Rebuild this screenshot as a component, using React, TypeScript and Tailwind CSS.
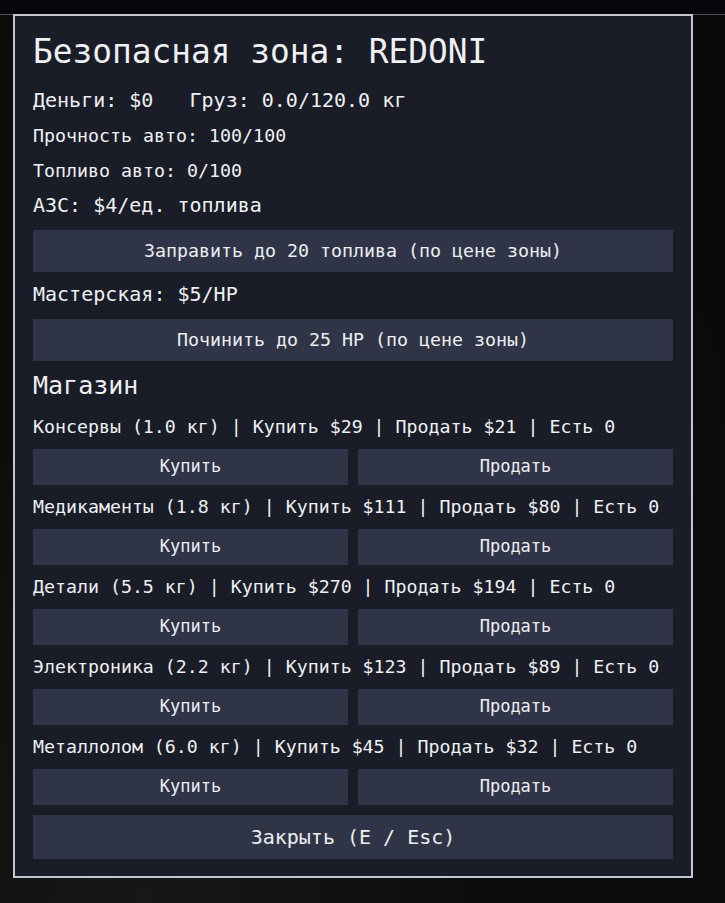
import React from 'react'

type Item = {
  name: string
  weight: string
  buy: number
  sell: number
  have: number
}

const items: Item[] = [
  { name: 'Консервы', weight: '1.0', buy: 29, sell: 21, have: 0 },
  { name: 'Медикаменты', weight: '1.8', buy: 111, sell: 80, have: 0 },
  { name: 'Детали', weight: '5.5', buy: 270, sell: 194, have: 0 },
  { name: 'Электроника', weight: '2.2', buy: 123, sell: 89, have: 0 },
  { name: 'Металлолом', weight: '6.0', buy: 45, sell: 32, have: 0 },
]

const mono = { fontFamily: '"DejaVu Sans Mono", "Liberation Mono", monospace' }

function Line({ children, small = false }: { children: React.ReactNode; small?: boolean }) {
  return (
    <div className={`h-[35px] leading-[35px] whitespace-pre ${small ? 'text-[18.3px]' : 'text-[20px]'}`}>
      {children}
    </div>
  )
}

function WideButton({ children, className = '' }: { children: React.ReactNode; className?: string }) {
  return (
    <button className={`w-full bg-[#2f3547] text-[#eceef2] flex items-center justify-center whitespace-pre ${className}`}>
      {children}
    </button>
  )
}

export default function App() {
  return (
    <div className="relative w-[725px] h-[903px] overflow-hidden bg-[#0a0a0a]" style={mono}>
      {/* top hud strip */}
      <div className="h-[15px] bg-[#05070c] border-b border-[#4a4f5a]" />

      {/* dim scene behind the dialog */}
      <div className="absolute left-0 right-0 top-[15px] bottom-0 bg-[radial-gradient(ellipse_at_20%_100%,#171717_0%,#0d0d0d_40%,#090909_100%)]" />

      {/* safe zone dialog */}
      <div className="absolute left-[13px] top-[14px] w-[680px] bg-[#1a1d27] border-2 border-[#c3c7cf] px-[18px] pt-[16px] pb-[17px] text-[#eef0f3]">
        <div className="h-[40px] leading-[40px] text-[32.8px] whitespace-pre">Безопасная зона: REDONI</div>

        <div className="mt-[11px]">
          <Line>Деньги: $0   Груз: 0.0/120.0 кг</Line>
          <Line small>Прочность авто: 100/100</Line>
          <Line small>Топливо авто: 0/100</Line>
          <Line>АЗС: $4/ед. топлива</Line>
        </div>

        <WideButton className="mt-[7px] h-[42px] text-[18.3px]">Заправить до 20 топлива (по цене зоны)</WideButton>

        <div className="mt-[5px]">
          <Line>Мастерская: $5/HP</Line>
        </div>

        <WideButton className="mt-[7px] h-[42px] text-[18.3px]">Починить до 25 HP (по цене зоны)</WideButton>

        <div className="mt-[5px] h-[40px] leading-[40px] text-[25px]">Магазин</div>

        {/* shop rows */}
        <div className="mt-[3px]">
          {items.map((it, i) => (
            <div key={it.name} className={i > 0 ? 'mt-[4px]' : ''}>
              <div className="h-[35px] leading-[35px] text-[18.25px] whitespace-pre">
                {`${it.name} (${it.weight} кг) | Купить $${it.buy} | Продать $${it.sell} | Есть ${it.have}`}
              </div>
              <div className="mt-[5px] grid grid-cols-2 gap-[10px]">
                <WideButton className="h-[36px] text-[17px]">Купить</WideButton>
                <WideButton className="h-[36px] text-[17px]">Продать</WideButton>
              </div>
            </div>
          ))}
        </div>

        <WideButton className="mt-[10px] h-[44px] text-[20px]">Закрыть (E / Esc)</WideButton>
      </div>
    </div>
  )
}
